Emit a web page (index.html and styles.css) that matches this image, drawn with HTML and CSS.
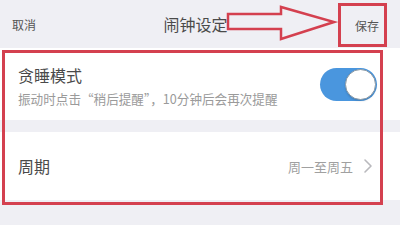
FILE: index.html
```html
<!DOCTYPE html>
<html lang="zh">
<head>
<meta charset="utf-8">
<link rel="stylesheet" href="styles.css">
</head>
<body>
<div class="page">
  <header class="nav">
    <span class="cancel">取消</span>
    <span class="title">闹钟设定</span>
    <span class="save">保存</span>
  </header>
  <section class="card snooze">
    <div class="text">
      <div class="label">贪睡模式</div>
      <div class="desc">振动时点击“稍后提醒”，10分钟后会再次提醒</div>
    </div>
    <div class="toggle"><span class="knob"></span></div>
  </section>
  <section class="card period">
    <div class="label">周期</div>
    <div class="value">周一至周五
      <svg class="chev" width="10" height="16" viewBox="0 0 10 16"><polyline points="2,2 8,8 2,14" fill="none" stroke="#b9b9bd" stroke-width="1.6" stroke-linecap="round" stroke-linejoin="round"/></svg>
    </div>
  </section>
  <div class="mark-box"></div>
  <svg class="mark-arrow" width="400" height="50" viewBox="0 0 400 50">
    <polygon points="228,14 281,14 281,7 334,22 281,39 281,29 228,29" fill="none" stroke="#d4404f" stroke-width="2.5" stroke-linejoin="miter"/>
  </svg>
</div>
</body>
</html>
```
FILE: styles.css
```css
* { box-sizing: border-box; }
html, body { margin: 0; padding: 0; }
body {
  width: 400px;
  height: 225px;
  overflow: hidden;
  background: #efeff4;
  font-family: "Noto Sans CJK SC", "Noto Sans", sans-serif;
}
.page { position: relative; width: 400px; height: 225px; }
.nav {
  height: 48px;
  display: grid;
  grid-template-columns: 1fr auto 1fr;
  align-items: center;
  padding: 0 13px 0 12px;
}
.cancel { font-size: 12px; color: #555; justify-self: start; }
.title { font-size: 16px; color: #4a4a4a; margin-right: 8px; }
.save {
  justify-self: end;
  font-size: 12px;
  color: #555;
  height: 44px;
  width: 49px;
  margin-top: 2px;
  border: 3px solid #d4404f;
  display: flex;
  align-items: center;
  padding-left: 14px;
}
.card {
  background: #fff;
  height: 72px;
  display: flex;
  align-items: center;
  padding: 0 23px 0 18px;
}
.snooze { justify-content: space-between; }
.period { margin-top: 12px; height: 68px; justify-content: space-between; padding-right: 27px; }
.text { display: flex; flex-direction: column; gap: 4px; margin-top: 3px; }
.label { font-size: 16px; color: #4a4a4a; line-height: 22px; }
.desc { font-size: 12.6px; color: #9a9a9a; line-height: 18px; }
.toggle {
  position: relative;
  width: 57px;
  height: 33px;
  border-radius: 17px;
  background: #4a96de;
}
.knob {
  position: absolute;
  right: 1px;
  top: 1px;
  width: 31px;
  height: 31px;
  border-radius: 50%;
  background: #fff;
  border: 1.5px solid #8d9aa5;
  box-shadow: 0 1px 2px rgba(0,0,0,0.15);
}
.value {
  display: flex;
  align-items: center;
  gap: 10px;
  font-size: 13px;
  color: #a0a0a0;
}
.chev { display: block; }
.mark-box {
  position: absolute;
  left: 2px;
  top: 50px;
  width: 381px;
  height: 155px;
  border: 3px solid #d4404f;
}
.mark-arrow { position: absolute; left: 0; top: 0; }
```
